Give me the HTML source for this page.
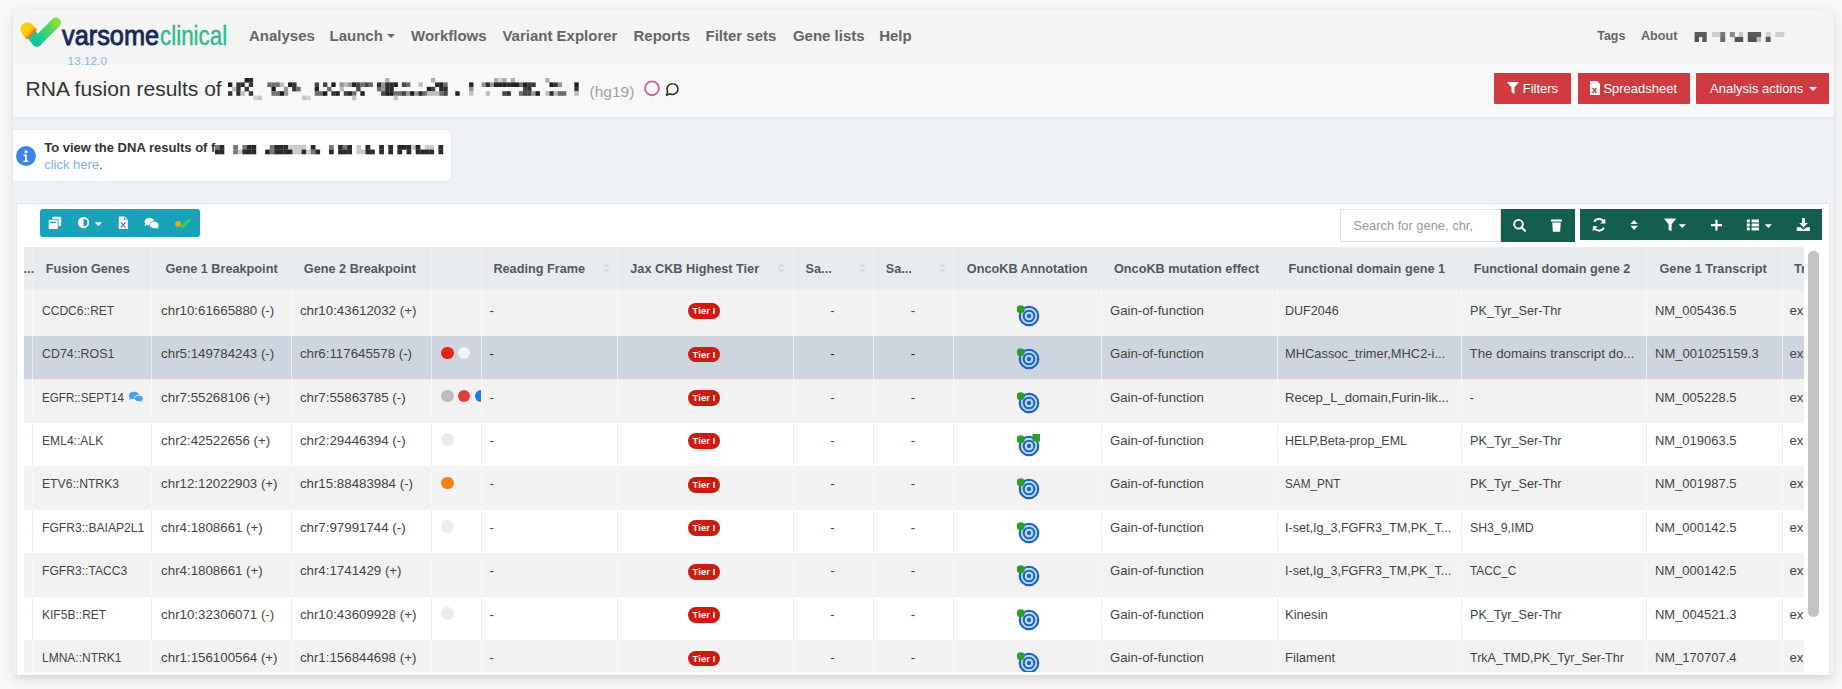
<!DOCTYPE html>
<html><head><meta charset="utf-8"><style>
html,body{margin:0;padding:0;}
body{width:1842px;height:689px;overflow:hidden;background:#fafafa;position:relative;font-family:"Liberation Sans", sans-serif;}
.t{position:absolute;white-space:nowrap;}
.r{position:absolute;}
</style></head><body>
<div class="r" style="left:13.00px;top:9.00px;width:1821.00px;height:666.00px;background:#eef2f7;box-shadow:0 4px 18px rgba(0,0,0,0.10),0 0 2px rgba(0,0,0,0.05),0 5px 5px -1px rgba(0,0,0,0.05);"></div><div class="r" style="left:13.00px;top:9.00px;width:1821.00px;height:55.00px;background:#f4f4f4;"></div><div class="r" style="left:13.00px;top:64.00px;width:1821.00px;height:54.50px;background:#f8f8f8;border-bottom:2.5px solid #e7eaed;box-sizing:border-box;"></div><svg class="r" style="left:17px;top:12.5px" width="48" height="38" viewBox="0 0 48 38">
<defs>
<linearGradient id="lg1" x1="0" y1="1" x2="1" y2="0"><stop offset="0" stop-color="#10c79c"/><stop offset="0.55" stop-color="#3fd46e"/><stop offset="1" stop-color="#86de3a"/></linearGradient>
<linearGradient id="lg2" x1="0.2" y1="0.1" x2="0.9" y2="0.9"><stop offset="0" stop-color="#ffd000"/><stop offset="0.5" stop-color="#fbb30c"/><stop offset="1" stop-color="#f26b22"/></linearGradient>
<clipPath id="cp1"><polygon points="-9.7,44.7 41.4,-2.9 41.4,-20 -20,-20 -20,44.7"/></clipPath>
</defs>
<path d="M11.5 17.5 L20 28.5" stroke="#14c995" stroke-width="10.5" stroke-linecap="round" fill="none"/>
<path d="M20 28.5 L39 9.5" stroke="url(#lg1)" stroke-width="10" stroke-linecap="round" fill="none"/>
<g clip-path="url(#cp1)"><path d="M10.5 16.3 L15 22" stroke="url(#lg2)" stroke-width="14" stroke-linecap="round" fill="none"/></g>
</svg><div class="t" style="left:62.20px;top:21.50px;font-size:28px;line-height:28px;color:#15295a;font-weight:400;transform:scaleX(0.905);transform-origin:0 0;-webkit-text-stroke:0.9px #15295a;">varsome</div><div class="t" style="left:160.40px;top:21.50px;font-size:28px;line-height:28px;color:#2dbd8a;font-weight:400;transform:scaleX(0.80);transform-origin:0 0;-webkit-text-stroke:0.4px #2dbd8a;">clinical</div><div class="t" style="left:67.60px;top:55.61px;font-size:11.8px;line-height:11.8px;color:#8ab9e6;font-weight:400;">13.12.0</div><div class="t" style="left:249.00px;top:28.00px;font-size:15px;line-height:15px;color:#666;font-weight:700;">Analyses</div><div class="t" style="left:329.50px;top:28.00px;font-size:15px;line-height:15px;color:#666;font-weight:700;">Launch</div><div class="t" style="left:411.00px;top:28.00px;font-size:15px;line-height:15px;color:#666;font-weight:700;">Workflows</div><div class="t" style="left:502.40px;top:28.00px;font-size:15px;line-height:15px;color:#666;font-weight:700;">Variant Explorer</div><div class="t" style="left:633.50px;top:28.00px;font-size:15px;line-height:15px;color:#666;font-weight:700;">Reports</div><div class="t" style="left:705.50px;top:28.00px;font-size:15px;line-height:15px;color:#666;font-weight:700;">Filter sets</div><div class="t" style="left:792.90px;top:28.00px;font-size:15px;line-height:15px;color:#666;font-weight:700;">Gene lists</div><div class="t" style="left:879.20px;top:28.00px;font-size:15px;line-height:15px;color:#666;font-weight:700;">Help</div><div class="r" style="left:387px;top:34px;width:0;height:0;border-left:4px solid transparent;border-right:4px solid transparent;border-top:4px solid #666"></div><div class="t" style="left:1597.30px;top:29.80px;font-size:12.4px;line-height:12.4px;color:#666;font-weight:700;">Tags</div><div class="t" style="left:1641.00px;top:29.63px;font-size:12.6px;line-height:12.6px;color:#666;font-weight:700;">About</div><svg class="r" style="left:1693.5px;top:32px" width="95" height="11"><rect x="0.60" y="0.00" width="12.15" height="5.1" fill="#5c5c5c"/><rect x="0.60" y="4.90" width="4.38" height="5.1" fill="#555"/><rect x="8.36" y="4.90" width="4.38" height="5.1" fill="#5c5c5c"/><rect x="17.92" y="0.00" width="8.56" height="5.1" fill="#cfcfcf"/><rect x="26.28" y="0.00" width="4.98" height="5.1" fill="#7a7a7a"/><rect x="26.28" y="4.90" width="4.98" height="5.1" fill="#6a6a6a"/><rect x="35.84" y="0.00" width="4.98" height="5.1" fill="#8a8a8a"/><rect x="44.80" y="0.00" width="4.38" height="5.1" fill="#c8c8c8"/><rect x="40.62" y="4.90" width="8.56" height="5.1" fill="#555"/><rect x="53.76" y="0.00" width="13.34" height="5.1" fill="#5a5a5a"/><rect x="53.76" y="4.90" width="9.16" height="5.1" fill="#505050"/><rect x="62.72" y="4.90" width="4.38" height="5.1" fill="#bdbdbd"/><rect x="71.68" y="0.00" width="4.98" height="5.1" fill="#d0d0d0"/><rect x="71.68" y="4.90" width="4.98" height="5.1" fill="#5a5a5a"/><rect x="81.24" y="0.00" width="9.16" height="5.1" fill="#cfcfcf"/></svg><div class="t" style="left:25.60px;top:77.82px;font-size:21px;line-height:21px;color:#333;font-weight:400;">RNA fusion results of</div><svg class="r" style="left:227.70px;top:78.20px" width="351.3" height="23.0"><rect x="0.00" y="4.40" width="4.35" height="4.60" fill="rgb(30,30,30)"/><rect x="0.00" y="13.20" width="4.35" height="4.60" fill="rgb(55,55,55)"/><rect x="4.15" y="8.80" width="4.35" height="4.60" fill="rgb(190,190,190)"/><rect x="8.30" y="4.40" width="4.35" height="4.60" fill="rgb(55,55,55)"/><rect x="8.30" y="8.80" width="4.35" height="4.60" fill="rgb(55,55,55)"/><rect x="8.30" y="13.20" width="4.35" height="4.60" fill="rgb(45,45,45)"/><rect x="12.45" y="4.40" width="4.35" height="4.60" fill="rgb(45,45,45)"/><rect x="12.45" y="13.20" width="4.35" height="4.60" fill="rgb(190,190,190)"/><rect x="16.60" y="0.00" width="4.35" height="4.60" fill="rgb(30,30,30)"/><rect x="16.60" y="8.80" width="4.35" height="4.60" fill="rgb(55,55,55)"/><rect x="20.75" y="0.00" width="4.35" height="4.60" fill="rgb(45,45,45)"/><rect x="20.75" y="4.40" width="4.35" height="4.60" fill="rgb(55,55,55)"/><rect x="20.75" y="13.20" width="4.35" height="4.60" fill="rgb(55,55,55)"/><rect x="25.30" y="17.60" width="4.35" height="4.60" fill="rgb(210,210,210)"/><rect x="29.45" y="17.60" width="4.35" height="4.60" fill="rgb(195,195,195)"/><rect x="39.30" y="4.40" width="4.35" height="4.60" fill="rgb(110,110,110)"/><rect x="43.45" y="4.40" width="4.35" height="4.60" fill="rgb(110,110,110)"/><rect x="43.45" y="8.80" width="4.35" height="4.60" fill="rgb(30,30,30)"/><rect x="43.45" y="13.20" width="4.35" height="4.60" fill="rgb(110,110,110)"/><rect x="47.60" y="4.40" width="4.35" height="4.60" fill="rgb(110,110,110)"/><rect x="47.60" y="13.20" width="4.35" height="4.60" fill="rgb(110,110,110)"/><rect x="51.75" y="4.40" width="4.35" height="4.60" fill="rgb(190,190,190)"/><rect x="51.75" y="13.20" width="4.35" height="4.60" fill="rgb(30,30,30)"/><rect x="55.90" y="8.80" width="4.35" height="4.60" fill="rgb(150,150,150)"/><rect x="55.90" y="13.20" width="4.35" height="4.60" fill="rgb(150,150,150)"/><rect x="60.05" y="4.40" width="4.35" height="4.60" fill="rgb(30,30,30)"/><rect x="64.20" y="4.40" width="4.35" height="4.60" fill="rgb(55,55,55)"/><rect x="64.20" y="8.80" width="4.35" height="4.60" fill="rgb(55,55,55)"/><rect x="68.35" y="8.80" width="4.35" height="4.60" fill="rgb(110,110,110)"/><rect x="74.30" y="17.60" width="4.35" height="4.60" fill="rgb(195,195,195)"/><rect x="78.45" y="17.60" width="4.35" height="4.60" fill="rgb(210,210,210)"/><rect x="86.70" y="4.40" width="4.35" height="4.60" fill="rgb(70,70,70)"/><rect x="86.70" y="8.80" width="4.35" height="4.60" fill="rgb(35,35,35)"/><rect x="86.70" y="13.20" width="4.35" height="4.60" fill="rgb(110,110,110)"/><rect x="90.85" y="13.20" width="4.35" height="4.60" fill="rgb(110,110,110)"/><rect x="95.00" y="4.40" width="4.35" height="4.60" fill="rgb(70,70,70)"/><rect x="95.00" y="13.20" width="4.35" height="4.60" fill="rgb(30,30,30)"/><rect x="99.15" y="8.80" width="4.35" height="4.60" fill="rgb(110,110,110)"/><rect x="103.30" y="4.40" width="4.35" height="4.60" fill="rgb(30,30,30)"/><rect x="103.30" y="13.20" width="4.35" height="4.60" fill="rgb(55,55,55)"/><rect x="107.45" y="13.20" width="4.35" height="4.60" fill="rgb(35,35,35)"/><rect x="111.60" y="4.40" width="4.35" height="4.60" fill="rgb(150,150,150)"/><rect x="111.60" y="8.80" width="4.35" height="4.60" fill="rgb(190,190,190)"/><rect x="115.75" y="4.40" width="4.35" height="4.60" fill="rgb(190,190,190)"/><rect x="115.75" y="13.20" width="4.35" height="4.60" fill="rgb(70,70,70)"/><rect x="119.90" y="4.40" width="4.35" height="4.60" fill="rgb(150,150,150)"/><rect x="119.90" y="13.20" width="4.35" height="4.60" fill="rgb(45,45,45)"/><rect x="124.05" y="4.40" width="4.35" height="4.60" fill="rgb(35,35,35)"/><rect x="124.05" y="13.20" width="4.35" height="4.60" fill="rgb(110,110,110)"/><rect x="124.05" y="17.60" width="4.35" height="4.60" fill="rgb(195,195,195)"/><rect x="128.20" y="4.40" width="4.35" height="4.60" fill="rgb(70,70,70)"/><rect x="128.20" y="8.80" width="4.35" height="4.60" fill="rgb(70,70,70)"/><rect x="132.35" y="4.40" width="4.35" height="4.60" fill="rgb(110,110,110)"/><rect x="132.35" y="13.20" width="4.35" height="4.60" fill="rgb(30,30,30)"/><rect x="136.50" y="4.40" width="4.35" height="4.60" fill="rgb(70,70,70)"/><rect x="140.65" y="4.40" width="4.35" height="4.60" fill="rgb(110,110,110)"/><rect x="148.95" y="4.40" width="4.35" height="4.60" fill="rgb(45,45,45)"/><rect x="148.95" y="8.80" width="4.35" height="4.60" fill="rgb(110,110,110)"/><rect x="153.10" y="4.40" width="4.35" height="4.60" fill="rgb(150,150,150)"/><rect x="153.10" y="8.80" width="4.35" height="4.60" fill="rgb(150,150,150)"/><rect x="153.10" y="13.20" width="4.35" height="4.60" fill="rgb(70,70,70)"/><rect x="157.25" y="0.00" width="4.35" height="4.60" fill="rgb(175,175,175)"/><rect x="157.25" y="4.40" width="4.35" height="4.60" fill="rgb(45,45,45)"/><rect x="157.25" y="8.80" width="4.35" height="4.60" fill="rgb(45,45,45)"/><rect x="157.25" y="13.20" width="4.35" height="4.60" fill="rgb(30,30,30)"/><rect x="161.40" y="4.40" width="4.35" height="4.60" fill="rgb(45,45,45)"/><rect x="161.40" y="8.80" width="4.35" height="4.60" fill="rgb(45,45,45)"/><rect x="161.40" y="13.20" width="4.35" height="4.60" fill="rgb(30,30,30)"/><rect x="165.55" y="4.40" width="4.35" height="4.60" fill="rgb(35,35,35)"/><rect x="165.55" y="13.20" width="4.35" height="4.60" fill="rgb(110,110,110)"/><rect x="165.55" y="17.60" width="4.35" height="4.60" fill="rgb(195,195,195)"/><rect x="169.70" y="13.20" width="4.35" height="4.60" fill="rgb(110,110,110)"/><rect x="173.85" y="4.40" width="4.35" height="4.60" fill="rgb(70,70,70)"/><rect x="173.85" y="13.20" width="4.35" height="4.60" fill="rgb(70,70,70)"/><rect x="178.00" y="4.40" width="4.35" height="4.60" fill="rgb(110,110,110)"/><rect x="178.00" y="13.20" width="4.35" height="4.60" fill="rgb(150,150,150)"/><rect x="182.15" y="13.20" width="4.35" height="4.60" fill="rgb(30,30,30)"/><rect x="186.30" y="13.20" width="4.35" height="4.60" fill="rgb(150,150,150)"/><rect x="190.45" y="4.40" width="4.35" height="4.60" fill="rgb(190,190,190)"/><rect x="190.45" y="13.20" width="4.35" height="4.60" fill="rgb(45,45,45)"/><rect x="194.60" y="13.20" width="4.35" height="4.60" fill="rgb(110,110,110)"/><rect x="198.75" y="8.80" width="4.35" height="4.60" fill="rgb(30,30,30)"/><rect x="198.75" y="13.20" width="4.35" height="4.60" fill="rgb(190,190,190)"/><rect x="202.90" y="0.00" width="4.35" height="4.60" fill="rgb(175,175,175)"/><rect x="202.90" y="8.80" width="4.35" height="4.60" fill="rgb(70,70,70)"/><rect x="202.90" y="13.20" width="4.35" height="4.60" fill="rgb(190,190,190)"/><rect x="207.05" y="4.40" width="4.35" height="4.60" fill="rgb(45,45,45)"/><rect x="207.05" y="13.20" width="4.35" height="4.60" fill="rgb(190,190,190)"/><rect x="211.20" y="4.40" width="4.35" height="4.60" fill="rgb(35,35,35)"/><rect x="211.20" y="8.80" width="4.35" height="4.60" fill="rgb(45,45,45)"/><rect x="211.20" y="13.20" width="4.35" height="4.60" fill="rgb(110,110,110)"/><rect x="215.35" y="4.40" width="4.35" height="4.60" fill="rgb(110,110,110)"/><rect x="215.35" y="8.80" width="4.35" height="4.60" fill="rgb(45,45,45)"/><rect x="215.35" y="13.20" width="4.35" height="4.60" fill="rgb(70,70,70)"/><rect x="227.30" y="13.20" width="4.35" height="4.60" fill="rgb(35,35,35)"/><rect x="241.10" y="4.40" width="4.35" height="4.60" fill="rgb(30,30,30)"/><rect x="241.10" y="8.80" width="4.35" height="4.60" fill="rgb(150,150,150)"/><rect x="241.10" y="13.20" width="4.35" height="4.60" fill="rgb(190,190,190)"/><rect x="253.55" y="4.40" width="4.35" height="4.60" fill="rgb(150,150,150)"/><rect x="257.70" y="4.40" width="4.35" height="4.60" fill="rgb(45,45,45)"/><rect x="257.70" y="13.20" width="4.35" height="4.60" fill="rgb(190,190,190)"/><rect x="261.85" y="4.40" width="4.35" height="4.60" fill="rgb(150,150,150)"/><rect x="266.00" y="0.00" width="4.35" height="4.60" fill="rgb(175,175,175)"/><rect x="266.00" y="4.40" width="4.35" height="4.60" fill="rgb(35,35,35)"/><rect x="270.15" y="0.00" width="4.35" height="4.60" fill="rgb(210,210,210)"/><rect x="270.15" y="4.40" width="4.35" height="4.60" fill="rgb(35,35,35)"/><rect x="274.30" y="0.00" width="4.35" height="4.60" fill="rgb(175,175,175)"/><rect x="274.30" y="4.40" width="4.35" height="4.60" fill="rgb(35,35,35)"/><rect x="274.30" y="13.20" width="4.35" height="4.60" fill="rgb(70,70,70)"/><rect x="278.45" y="4.40" width="4.35" height="4.60" fill="rgb(45,45,45)"/><rect x="278.45" y="13.20" width="4.35" height="4.60" fill="rgb(45,45,45)"/><rect x="282.60" y="0.00" width="4.35" height="4.60" fill="rgb(175,175,175)"/><rect x="282.60" y="4.40" width="4.35" height="4.60" fill="rgb(35,35,35)"/><rect x="286.75" y="4.40" width="4.35" height="4.60" fill="rgb(35,35,35)"/><rect x="290.90" y="4.40" width="4.35" height="4.60" fill="rgb(110,110,110)"/><rect x="290.90" y="13.20" width="4.35" height="4.60" fill="rgb(110,110,110)"/><rect x="295.05" y="4.40" width="4.35" height="4.60" fill="rgb(30,30,30)"/><rect x="295.05" y="8.80" width="4.35" height="4.60" fill="rgb(70,70,70)"/><rect x="295.05" y="13.20" width="4.35" height="4.60" fill="rgb(70,70,70)"/><rect x="299.20" y="4.40" width="4.35" height="4.60" fill="rgb(55,55,55)"/><rect x="299.20" y="8.80" width="4.35" height="4.60" fill="rgb(55,55,55)"/><rect x="299.20" y="13.20" width="4.35" height="4.60" fill="rgb(70,70,70)"/><rect x="303.35" y="4.40" width="4.35" height="4.60" fill="rgb(55,55,55)"/><rect x="303.35" y="13.20" width="4.35" height="4.60" fill="rgb(150,150,150)"/><rect x="307.50" y="13.20" width="4.35" height="4.60" fill="rgb(30,30,30)"/><rect x="317.30" y="0.00" width="4.35" height="4.60" fill="rgb(175,175,175)"/><rect x="317.30" y="13.20" width="4.35" height="4.60" fill="rgb(190,190,190)"/><rect x="321.45" y="4.40" width="4.35" height="4.60" fill="rgb(30,30,30)"/><rect x="321.45" y="13.20" width="4.35" height="4.60" fill="rgb(45,45,45)"/><rect x="325.60" y="4.40" width="4.35" height="4.60" fill="rgb(55,55,55)"/><rect x="325.60" y="13.20" width="4.35" height="4.60" fill="rgb(190,190,190)"/><rect x="329.75" y="4.40" width="4.35" height="4.60" fill="rgb(150,150,150)"/><rect x="329.75" y="13.20" width="4.35" height="4.60" fill="rgb(110,110,110)"/><rect x="333.90" y="13.20" width="4.35" height="4.60" fill="rgb(110,110,110)"/><rect x="346.35" y="4.40" width="4.35" height="4.60" fill="rgb(30,30,30)"/><rect x="346.35" y="8.80" width="4.35" height="4.60" fill="rgb(55,55,55)"/><rect x="346.35" y="13.20" width="4.35" height="4.60" fill="rgb(190,190,190)"/></svg><div class="t" style="left:589.50px;top:84.08px;font-size:15.5px;line-height:15.5px;color:#a2a2a2;font-weight:400;">(hg19)</div><svg class="r" style="left:642px;top:78px" width="20" height="20" viewBox="0 0 20 20"><circle cx="10" cy="10.3" r="6.9" fill="none" stroke="#d65c9d" stroke-width="1.9"/></svg><svg class="r" style="left:664px;top:81px" width="16" height="16" viewBox="0 0 16 16"><path d="M8.6 2.8a5.3 5.3 0 1 1 -2.6 9.9 L2.6 14.4 L3.6 10.6 A5.3 5.3 0 0 1 8.6 2.8z" fill="none" stroke="#333" stroke-width="1.6" stroke-linejoin="round"/></svg><div class="r" style="left:1494.30px;top:73.10px;width:76.90px;height:30.50px;background:#d03a40;border-radius:1px;"></div><div class="t" style="left:1522.70px;top:81.70px;font-size:13px;line-height:13px;color:#fff;font-weight:400;">Filters</div><div class="r" style="left:1577.90px;top:73.10px;width:112.30px;height:30.50px;background:#d03a40;border-radius:1px;"></div><div class="t" style="left:1603.40px;top:81.70px;font-size:13px;line-height:13px;color:#fff;font-weight:400;">Spreadsheet</div><div class="r" style="left:1696.30px;top:73.10px;width:133.20px;height:30.50px;background:#d03a40;border-radius:1px;"></div><div class="t" style="left:1710.00px;top:81.70px;font-size:13px;line-height:13px;color:#fff;font-weight:400;">Analysis actions</div><svg class="r" style="left:1506px;top:80px" width="14" height="16" viewBox="0 0 14 16"><path d="M1 2h12l-4.5 5.5V14l-3-2V7.5z" fill="#fff"/></svg><svg class="r" style="left:1589px;top:80px" width="12" height="16" viewBox="0 0 12 16"><path d="M1 1h7l3 3v11H1z" fill="#fff"/><path d="M3.5 8l4 5M7.5 8l-4 5" stroke="#d03a40" stroke-width="1.3"/></svg><div class="r" style="left:1809px;top:87px;width:0;height:0;border-left:4px solid transparent;border-right:4px solid transparent;border-top:4px solid #fff"></div><div class="r" style="left:13.00px;top:130.00px;width:438.00px;height:51.00px;background:#fff;border-radius:0 5px 5px 0;box-shadow:0 0 0 1px #e7eaee;"></div><div class="r" style="left:15.5px;top:145.5px;width:20px;height:20px;border-radius:50%;background:#3d84e6"></div><svg class="r" style="left:15.5px;top:145.5px" width="20" height="20" viewBox="0 0 20 20"><circle cx="10" cy="5.8" r="1.6" fill="#fff"/><path d="M7.5 8.5h3.3v6h1.5v1.5H7.5v-1.5h1.5v-4.5H7.5z" fill="#fff"/></svg><div class="t" style="left:44.20px;top:140.90px;font-size:13px;line-height:13px;color:#333;font-weight:700;">To view the DNA results of f</div><svg class="r" style="left:215.2px;top:144.5px" width="232" height="10"><rect x="0.00" y="0.00" width="4.76" height="4.75" fill="#77787c"/><rect x="0.00" y="4.55" width="4.76" height="4.75" fill="#2a2a2e"/><rect x="4.56" y="0.00" width="4.76" height="4.75" fill="#2a2a2e"/><rect x="4.56" y="4.55" width="4.76" height="4.75" fill="#2a2a2e"/><rect x="18.24" y="0.00" width="4.76" height="4.75" fill="#77787c"/><rect x="18.24" y="4.55" width="4.76" height="4.75" fill="#77787c"/><rect x="22.80" y="4.55" width="4.76" height="4.75" fill="#c9cacc"/><rect x="27.36" y="0.00" width="4.76" height="4.75" fill="#77787c"/><rect x="27.36" y="4.55" width="4.76" height="4.75" fill="#2a2a2e"/><rect x="31.92" y="0.00" width="4.76" height="4.75" fill="#2a2a2e"/><rect x="31.92" y="4.55" width="4.76" height="4.75" fill="#2a2a2e"/><rect x="36.48" y="0.00" width="4.76" height="4.75" fill="#2a2a2e"/><rect x="36.48" y="4.55" width="4.76" height="4.75" fill="#2a2a2e"/><rect x="50.16" y="4.55" width="4.76" height="4.75" fill="#2a2a2e"/><rect x="54.72" y="0.00" width="4.76" height="4.75" fill="#77787c"/><rect x="54.72" y="4.55" width="4.76" height="4.75" fill="#77787c"/><rect x="59.28" y="0.00" width="4.76" height="4.75" fill="#2a2a2e"/><rect x="59.28" y="4.55" width="4.76" height="4.75" fill="#2a2a2e"/><rect x="63.84" y="0.00" width="4.76" height="4.75" fill="#2a2a2e"/><rect x="63.84" y="4.55" width="4.76" height="4.75" fill="#2a2a2e"/><rect x="68.40" y="0.00" width="4.76" height="4.75" fill="#2a2a2e"/><rect x="68.40" y="4.55" width="4.76" height="4.75" fill="#2a2a2e"/><rect x="72.96" y="0.00" width="4.76" height="4.75" fill="#c9cacc"/><rect x="72.96" y="4.55" width="4.76" height="4.75" fill="#2a2a2e"/><rect x="77.52" y="0.00" width="4.76" height="4.75" fill="#c9cacc"/><rect x="77.52" y="4.55" width="4.76" height="4.75" fill="#c9cacc"/><rect x="82.08" y="0.00" width="4.76" height="4.75" fill="#c9cacc"/><rect x="82.08" y="4.55" width="4.76" height="4.75" fill="#c9cacc"/><rect x="86.64" y="0.00" width="4.76" height="4.75" fill="#c9cacc"/><rect x="86.64" y="4.55" width="4.76" height="4.75" fill="#2a2a2e"/><rect x="91.20" y="4.55" width="4.76" height="4.75" fill="#c9cacc"/><rect x="95.76" y="0.00" width="4.76" height="4.75" fill="#2a2a2e"/><rect x="95.76" y="4.55" width="4.76" height="4.75" fill="#77787c"/><rect x="100.32" y="4.55" width="4.76" height="4.75" fill="#2a2a2e"/><rect x="114.00" y="0.00" width="4.76" height="4.75" fill="#77787c"/><rect x="114.00" y="4.55" width="4.76" height="4.75" fill="#2a2a2e"/><rect x="123.12" y="0.00" width="4.76" height="4.75" fill="#2a2a2e"/><rect x="123.12" y="4.55" width="4.76" height="4.75" fill="#2a2a2e"/><rect x="127.68" y="0.00" width="4.76" height="4.75" fill="#77787c"/><rect x="127.68" y="4.55" width="4.76" height="4.75" fill="#2a2a2e"/><rect x="132.24" y="0.00" width="4.76" height="4.75" fill="#2a2a2e"/><rect x="132.24" y="4.55" width="4.76" height="4.75" fill="#2a2a2e"/><rect x="141.36" y="0.00" width="4.76" height="4.75" fill="#c9cacc"/><rect x="141.36" y="4.55" width="4.76" height="4.75" fill="#c9cacc"/><rect x="145.92" y="4.55" width="4.76" height="4.75" fill="#c9cacc"/><rect x="150.48" y="0.00" width="4.76" height="4.75" fill="#2a2a2e"/><rect x="150.48" y="4.55" width="4.76" height="4.75" fill="#2a2a2e"/><rect x="155.04" y="4.55" width="4.76" height="4.75" fill="#2a2a2e"/><rect x="164.16" y="0.00" width="4.76" height="4.75" fill="#2a2a2e"/><rect x="164.16" y="4.55" width="4.76" height="4.75" fill="#2a2a2e"/><rect x="173.28" y="0.00" width="4.76" height="4.75" fill="#2a2a2e"/><rect x="173.28" y="4.55" width="4.76" height="4.75" fill="#2a2a2e"/><rect x="182.40" y="0.00" width="4.76" height="4.75" fill="#2a2a2e"/><rect x="182.40" y="4.55" width="4.76" height="4.75" fill="#2a2a2e"/><rect x="186.96" y="0.00" width="4.76" height="4.75" fill="#2a2a2e"/><rect x="191.52" y="0.00" width="4.76" height="4.75" fill="#2a2a2e"/><rect x="191.52" y="4.55" width="4.76" height="4.75" fill="#2a2a2e"/><rect x="196.08" y="0.00" width="4.76" height="4.75" fill="#c9cacc"/><rect x="200.64" y="0.00" width="4.76" height="4.75" fill="#2a2a2e"/><rect x="200.64" y="4.55" width="4.76" height="4.75" fill="#2a2a2e"/><rect x="205.20" y="4.55" width="4.76" height="4.75" fill="#2a2a2e"/><rect x="209.76" y="0.00" width="4.76" height="4.75" fill="#c9cacc"/><rect x="209.76" y="4.55" width="4.76" height="4.75" fill="#2a2a2e"/><rect x="214.32" y="0.00" width="4.76" height="4.75" fill="#c9cacc"/><rect x="214.32" y="4.55" width="4.76" height="4.75" fill="#2a2a2e"/><rect x="223.44" y="0.00" width="4.76" height="4.75" fill="#2a2a2e"/><rect x="223.44" y="4.55" width="4.76" height="4.75" fill="#2a2a2e"/></svg><div class="t" style="left:44.20px;top:157.50px;font-size:13px;line-height:13px;color:#333;font-weight:400;"><span style="color:#7fb2e5">click here</span>.</div><div class="r" style="left:15.50px;top:202.50px;width:1814.50px;height:472.50px;background:#fff;border:1px solid #e4e6e9;border-bottom:none;box-sizing:border-box;"></div><div class="r" style="left:40.00px;top:209.30px;width:160.00px;height:28.00px;background:#17a2b8;border-radius:3px;"></div><div class="r" style="left:1340.00px;top:209.20px;width:161.00px;height:32.40px;background:#fff;border:1px solid #e0e0e0;box-sizing:border-box;"></div><div class="t" style="left:1353.30px;top:219.88px;font-size:12.9px;line-height:12.9px;color:#9a9a9a;font-weight:400;">Search for gene, chr,</div><div class="r" style="left:1501.00px;top:209.20px;width:74.00px;height:32.40px;background:#145e4f;"></div><div class="r" style="left:1580.00px;top:209.20px;width:242.20px;height:31.20px;background:#145e4f;"></div><svg class="r" style="left:40px;top:209px" width="160" height="29" viewBox="40 209 160 29">
<rect x="52.2" y="216.7" width="8.9" height="9.6" rx="1" fill="#fff"/>
<rect x="48.0" y="219.0" width="10.6" height="10.9" rx="1.2" fill="#17a2b8"/>
<rect x="48.7" y="219.8" width="9.1" height="9.3" rx="1" fill="#fff"/>
<rect x="49.8" y="221.7" width="6" height="1.3" fill="#17a2b8"/>
<circle cx="83.5" cy="222.6" r="4.8" fill="none" stroke="#fff" stroke-width="1.7"/>
<path d="M83.5 217.8 A4.8 4.8 0 0 0 83.5 227.4 Z" fill="#fff"/>
<path d="M94.6 222.2 H102.2 L98.4 226.3 Z" fill="#fff"/>
<path d="M118.8 216.4 H124.8 L127.8 219.4 V229 H118.8 Z" fill="#fff"/>
<path d="M124.5 216.6 V219.7 H127.6" fill="none" stroke="#17a2b8" stroke-width="0.8"/>
<path d="M121 222.3 L125.4 227.6 M125.4 222.3 L121 227.6" stroke="#4d7f88" stroke-width="1.3"/>
<ellipse cx="149.5" cy="221.6" rx="4.9" ry="3.8" fill="#fff"/>
<path d="M145.2 223.5 L144.5 226 L148 224.8 Z" fill="#fff"/>
<ellipse cx="154.3" cy="225" rx="4.7" ry="3.7" fill="#fff" stroke="#17a2b8" stroke-width="0.8"/>
<path d="M157.5 226.5 L159 228.8 L155.5 228 Z" fill="#fff"/>
<path d="M182.3 226.6 L189.1 220.3" stroke="#27cf6a" stroke-width="3.6" stroke-linecap="round"/>
<circle cx="178.1" cy="223.9" r="2.9" fill="#f4a21a"/>
</svg><svg class="r" style="left:1501px;top:209px" width="322" height="33" viewBox="1501 209 322 33">
<circle cx="1518.5" cy="224.2" r="4.3" fill="none" stroke="#fff" stroke-width="1.9"/>
<path d="M1521.6 227.4 L1525 230.8" stroke="#fff" stroke-width="2.1" stroke-linecap="round"/>
<rect x="1551" y="219.6" width="10.9" height="1.9" rx="0.5" fill="#fff"/>
<path d="M1552.2 222.5 H1560.8 L1560.1 231.8 H1552.9 Z" fill="#fff"/>
<path d="M1604.3 222.6 A5.6 5.6 0 0 0 1594.2 221.8" fill="none" stroke="#fff" stroke-width="2"/>
<path d="M1605.3 218.4 V223.4 H1600.4 Z" fill="#fff"/>
<path d="M1593.8 227 A5.6 5.6 0 0 0 1603.9 227.8" fill="none" stroke="#fff" stroke-width="2"/>
<path d="M1592.8 231.2 V226.2 H1597.7 Z" fill="#fff"/>
<path d="M1630.4 224 L1634.1 219.9 L1637.8 224 Z M1630.4 225.8 L1634.1 230 L1637.8 225.8 Z" fill="#fff"/>
<path d="M1663.8 218.4 H1676.3 L1671.6 224.3 V230.9 L1668.6 230 V224.3 Z" fill="#fff"/>
<path d="M1678.7 224.3 H1685.9 L1682.3 227.9 Z" fill="#fff"/>
<path d="M1716.45 219.8 V230.4 M1710.9 225.1 H1722" stroke="#fff" stroke-width="2.2"/>
<rect x="1746.8" y="219.5" width="3" height="2.9" fill="#fff"/><rect x="1751.6" y="219.5" width="7.4" height="2.9" fill="#fff"/>
<rect x="1746.8" y="223.5" width="3" height="2.9" fill="#fff"/><rect x="1751.6" y="223.5" width="7.4" height="2.9" fill="#fff"/>
<rect x="1746.8" y="227.5" width="3" height="2.9" fill="#fff"/><rect x="1751.6" y="227.5" width="7.4" height="2.9" fill="#fff"/>
<path d="M1764.8 224.2 H1771.9 L1768.35 228 Z" fill="#fff"/>
<path d="M1802 218.1 H1805 V223 H1807.8 L1803.5 227.4 L1799.2 223 H1802 Z" fill="#fff"/>
<path d="M1796.7 227.3 H1800.5 L1803.5 229.8 L1806.5 227.3 H1809.9 V231 H1796.7 Z" fill="#fff"/>
</svg><div class="r" style="left:24px;top:247px;width:1779.5px;height:43px;overflow:hidden;background:#e9ecef"></div><div class="r" style="left:31.80px;top:247.00px;width:1.00px;height:43.00px;background:#eef0f3;"></div><div class="r" style="left:151.00px;top:247.00px;width:1.00px;height:43.00px;background:#eef0f3;"></div><div class="r" style="left:290.50px;top:247.00px;width:1.00px;height:43.00px;background:#eef0f3;"></div><div class="r" style="left:430.50px;top:247.00px;width:1.00px;height:43.00px;background:#eef0f3;"></div><div class="r" style="left:481.00px;top:247.00px;width:1.00px;height:43.00px;background:#eef0f3;"></div><div class="r" style="left:617.00px;top:247.00px;width:1.00px;height:43.00px;background:#eef0f3;"></div><div class="r" style="left:792.50px;top:247.00px;width:1.00px;height:43.00px;background:#eef0f3;"></div><div class="r" style="left:872.50px;top:247.00px;width:1.00px;height:43.00px;background:#eef0f3;"></div><div class="r" style="left:953.00px;top:247.00px;width:1.00px;height:43.00px;background:#eef0f3;"></div><div class="r" style="left:1101.00px;top:247.00px;width:1.00px;height:43.00px;background:#eef0f3;"></div><div class="r" style="left:1276.50px;top:247.00px;width:1.00px;height:43.00px;background:#eef0f3;"></div><div class="r" style="left:1460.50px;top:247.00px;width:1.00px;height:43.00px;background:#eef0f3;"></div><div class="r" style="left:1646.00px;top:247.00px;width:1.00px;height:43.00px;background:#eef0f3;"></div><div class="r" style="left:1782.00px;top:247.00px;width:1.00px;height:43.00px;background:#eef0f3;"></div><div class="r" style="left:24px;top:247px;width:1779.5px;height:43px;overflow:hidden"><div class="t" style="left:-0.40px;top:15.65px;font-size:12.7px;line-height:12.7px;color:#54585d;font-weight:700">...</div><div class="t" style="left:21.80px;top:15.65px;font-size:12.7px;line-height:12.7px;color:#54585d;font-weight:700">Fusion Genes</div><div class="t" style="left:141.50px;top:15.65px;font-size:12.7px;line-height:12.7px;color:#54585d;font-weight:700">Gene 1 Breakpoint</div><div class="t" style="left:279.80px;top:15.65px;font-size:12.7px;line-height:12.7px;color:#54585d;font-weight:700">Gene 2 Breakpoint</div><div class="t" style="left:469.40px;top:15.65px;font-size:12.7px;line-height:12.7px;color:#54585d;font-weight:700">Reading Frame</div><div class="t" style="left:606.30px;top:15.65px;font-size:12.7px;line-height:12.7px;color:#54585d;font-weight:700">Jax CKB Highest Tier</div><div class="t" style="left:781.60px;top:15.65px;font-size:12.7px;line-height:12.7px;color:#54585d;font-weight:700">Sa...</div><div class="t" style="left:861.70px;top:15.65px;font-size:12.7px;line-height:12.7px;color:#54585d;font-weight:700">Sa...</div><div class="t" style="left:942.80px;top:15.65px;font-size:12.7px;line-height:12.7px;color:#54585d;font-weight:700">OncoKB Annotation</div><div class="t" style="left:1090.00px;top:15.65px;font-size:12.7px;line-height:12.7px;color:#54585d;font-weight:700">OncoKB mutation effect</div><div class="t" style="left:1264.60px;top:15.65px;font-size:12.7px;line-height:12.7px;color:#54585d;font-weight:700">Functional domain gene 1</div><div class="t" style="left:1449.80px;top:15.65px;font-size:12.7px;line-height:12.7px;color:#54585d;font-weight:700">Functional domain gene 2</div><div class="t" style="left:1635.50px;top:15.65px;font-size:12.7px;line-height:12.7px;color:#54585d;font-weight:700">Gene 1 Transcript</div><div class="t" style="left:1770.00px;top:15.65px;font-size:12.7px;line-height:12.7px;color:#54585d;font-weight:700">Tr</div><svg class="r" style="left:578px;top:15px" width="8" height="12" viewBox="0 0 8 12"><path d="M4 0.5L7.5 5H0.5z M4 11.5L7.5 7H0.5z" fill="#d9dce0"/></svg><svg class="r" style="left:753px;top:15px" width="8" height="12" viewBox="0 0 8 12"><path d="M4 0.5L7.5 5H0.5z M4 11.5L7.5 7H0.5z" fill="#d9dce0"/></svg><svg class="r" style="left:833.5px;top:15px" width="8" height="12" viewBox="0 0 8 12"><path d="M4 0.5L7.5 5H0.5z M4 11.5L7.5 7H0.5z" fill="#d9dce0"/></svg><svg class="r" style="left:914px;top:15px" width="8" height="12" viewBox="0 0 8 12"><path d="M4 0.5L7.5 5H0.5z M4 11.5L7.5 7H0.5z" fill="#d9dce0"/></svg></div><div class="r" style="left:24px;top:290px;width:1779.5px;height:382px;overflow:hidden"><div class="r" style="left:0;top:0.00px;width:1779.5px;height:46.00px;background:#f2f2f2"></div><div class="r" style="left:7.80px;top:0.00px;width:1px;height:46.00px;background:#f8f8f8"></div><div class="r" style="left:127.00px;top:0.00px;width:1px;height:46.00px;background:#f8f8f8"></div><div class="r" style="left:266.50px;top:0.00px;width:1px;height:46.00px;background:#f8f8f8"></div><div class="r" style="left:406.50px;top:0.00px;width:1px;height:46.00px;background:#f8f8f8"></div><div class="r" style="left:457.00px;top:0.00px;width:1px;height:46.00px;background:#f8f8f8"></div><div class="r" style="left:593.00px;top:0.00px;width:1px;height:46.00px;background:#f8f8f8"></div><div class="r" style="left:768.50px;top:0.00px;width:1px;height:46.00px;background:#f8f8f8"></div><div class="r" style="left:848.50px;top:0.00px;width:1px;height:46.00px;background:#f8f8f8"></div><div class="r" style="left:929.00px;top:0.00px;width:1px;height:46.00px;background:#f8f8f8"></div><div class="r" style="left:1077.00px;top:0.00px;width:1px;height:46.00px;background:#f8f8f8"></div><div class="r" style="left:1252.50px;top:0.00px;width:1px;height:46.00px;background:#f8f8f8"></div><div class="r" style="left:1436.50px;top:0.00px;width:1px;height:46.00px;background:#f8f8f8"></div><div class="r" style="left:1622.00px;top:0.00px;width:1px;height:46.00px;background:#f8f8f8"></div><div class="r" style="left:1758.00px;top:0.00px;width:1px;height:46.00px;background:#f8f8f8"></div><div class="t" style="left:17.80px;top:13.74px;font-size:13.3px;line-height:13.3px;color:#444;transform:scaleX(0.905);transform-origin:0 0;">CCDC6::RET</div><div class="t" style="left:137.10px;top:13.74px;font-size:13.3px;line-height:13.3px;color:#444;">chr10:61665880 (-)</div><div class="t" style="left:275.90px;top:13.74px;font-size:13.3px;line-height:13.3px;color:#444;">chr10:43612032 (+)</div><div class="t" style="left:465.50px;top:13.74px;font-size:13.3px;line-height:13.3px;color:#444;">-</div><div class="t" style="left:806.20px;top:13.74px;font-size:13.3px;line-height:13.3px;color:#444;">-</div><div class="t" style="left:886.70px;top:13.74px;font-size:13.3px;line-height:13.3px;color:#444;">-</div><div class="t" style="left:1085.50px;top:13.74px;font-size:13.3px;line-height:13.3px;color:#444;transform:scaleX(0.992);transform-origin:0 0;">Gain-of-function</div><div class="t" style="left:1260.50px;top:13.74px;font-size:13.3px;line-height:13.3px;color:#444;transform:scaleX(0.942);transform-origin:0 0;">DUF2046</div><div class="t" style="left:1445.60px;top:13.74px;font-size:13.3px;line-height:13.3px;color:#444;transform:scaleX(0.952);transform-origin:0 0;">PK_Tyr_Ser-Thr</div><div class="t" style="left:1631.30px;top:13.74px;font-size:13.3px;line-height:13.3px;color:#444;transform:scaleX(0.975);transform-origin:0 0;">NM_005436.5</div><div class="t" style="left:1765.40px;top:13.74px;font-size:13.3px;line-height:13.3px;color:#444;">ex</div><div class="r" style="left:664.2px;top:13.20px;width:31.7px;height:15.8px;border-radius:7.9px;background:#cc1c10;color:#fff;font-weight:700;font-size:9.4px;line-height:15.8px;text-align:center;letter-spacing:0.15px">Tier I</div><svg class="r" style="left:992.80px;top:13.70px" width="24" height="24" viewBox="0 0 24 24"><circle cx="12" cy="12" r="9.2" fill="none" stroke="#1e63be" stroke-width="2.3"/><circle cx="12" cy="12" r="7.2" fill="none" stroke="#a8d6fa" stroke-width="1.6"/><circle cx="12" cy="12" r="5.3" fill="none" stroke="#1e63be" stroke-width="2.1"/><circle cx="12" cy="12" r="3.3" fill="none" stroke="#a8d6fa" stroke-width="1.5"/><circle cx="12" cy="12" r="2.2" fill="#1e63be"/><circle cx="3.6" cy="5.2" r="4" fill="#2c9e2c"/></svg><div class="r" style="left:0;top:46.00px;width:1779.5px;height:43.42px;background:#ced5de"></div><div class="r" style="left:7.80px;top:46.00px;width:1px;height:43.42px;background:#e9edf1"></div><div class="r" style="left:127.00px;top:46.00px;width:1px;height:43.42px;background:#e9edf1"></div><div class="r" style="left:266.50px;top:46.00px;width:1px;height:43.42px;background:#e9edf1"></div><div class="r" style="left:406.50px;top:46.00px;width:1px;height:43.42px;background:#e9edf1"></div><div class="r" style="left:457.00px;top:46.00px;width:1px;height:43.42px;background:#e9edf1"></div><div class="r" style="left:593.00px;top:46.00px;width:1px;height:43.42px;background:#e9edf1"></div><div class="r" style="left:768.50px;top:46.00px;width:1px;height:43.42px;background:#e9edf1"></div><div class="r" style="left:848.50px;top:46.00px;width:1px;height:43.42px;background:#e9edf1"></div><div class="r" style="left:929.00px;top:46.00px;width:1px;height:43.42px;background:#e9edf1"></div><div class="r" style="left:1077.00px;top:46.00px;width:1px;height:43.42px;background:#e9edf1"></div><div class="r" style="left:1252.50px;top:46.00px;width:1px;height:43.42px;background:#e9edf1"></div><div class="r" style="left:1436.50px;top:46.00px;width:1px;height:43.42px;background:#e9edf1"></div><div class="r" style="left:1622.00px;top:46.00px;width:1px;height:43.42px;background:#e9edf1"></div><div class="r" style="left:1758.00px;top:46.00px;width:1px;height:43.42px;background:#e9edf1"></div><div class="t" style="left:17.80px;top:57.16px;font-size:13.3px;line-height:13.3px;color:#444;transform:scaleX(0.932);transform-origin:0 0;">CD74::ROS1</div><div class="t" style="left:137.10px;top:57.16px;font-size:13.3px;line-height:13.3px;color:#444;">chr5:149784243 (-)</div><div class="t" style="left:275.90px;top:57.16px;font-size:13.3px;line-height:13.3px;color:#444;">chr6:117645578 (-)</div><div class="t" style="left:465.50px;top:57.16px;font-size:13.3px;line-height:13.3px;color:#222;">-</div><div class="t" style="left:806.20px;top:57.16px;font-size:13.3px;line-height:13.3px;color:#222;">-</div><div class="t" style="left:886.70px;top:57.16px;font-size:13.3px;line-height:13.3px;color:#222;">-</div><div class="t" style="left:1085.50px;top:57.16px;font-size:13.3px;line-height:13.3px;color:#444;transform:scaleX(0.992);transform-origin:0 0;">Gain-of-function</div><div class="t" style="left:1260.50px;top:57.16px;font-size:13.3px;line-height:13.3px;color:#444;transform:scaleX(0.968);transform-origin:0 0;">MHCassoc_trimer,MHC2-i...</div><div class="t" style="left:1445.60px;top:57.16px;font-size:13.3px;line-height:13.3px;color:#444;">The domains transcript do...</div><div class="t" style="left:1631.30px;top:57.16px;font-size:13.3px;line-height:13.3px;color:#444;transform:scaleX(0.981);transform-origin:0 0;">NM_001025159.3</div><div class="t" style="left:1765.40px;top:57.16px;font-size:13.3px;line-height:13.3px;color:#444;">ex</div><div class="r" style="left:407px;top:46.00px;width:50px;height:43.42px;overflow:hidden"><div class="r" style="left:10.35px;top:10.57px;width:12.5px;height:12.5px;border-radius:50%;background:#e8241a"></div><div class="r" style="left:26.95px;top:10.57px;width:12.5px;height:12.5px;border-radius:50%;background:#f4f4f4"></div></div><div class="r" style="left:664.2px;top:56.62px;width:31.7px;height:15.8px;border-radius:7.9px;background:#cc1c10;color:#fff;font-weight:700;font-size:9.4px;line-height:15.8px;text-align:center;letter-spacing:0.15px">Tier I</div><svg class="r" style="left:992.80px;top:57.12px" width="24" height="24" viewBox="0 0 24 24"><circle cx="12" cy="12" r="9.2" fill="none" stroke="#1e63be" stroke-width="2.3"/><circle cx="12" cy="12" r="7.2" fill="none" stroke="#a8d6fa" stroke-width="1.6"/><circle cx="12" cy="12" r="5.3" fill="none" stroke="#1e63be" stroke-width="2.1"/><circle cx="12" cy="12" r="3.3" fill="none" stroke="#a8d6fa" stroke-width="1.5"/><circle cx="12" cy="12" r="2.2" fill="#1e63be"/><circle cx="3.6" cy="5.2" r="4" fill="#2c9e2c"/></svg><div class="r" style="left:0;top:89.42px;width:1779.5px;height:43.42px;background:#f2f2f2"></div><div class="r" style="left:7.80px;top:89.42px;width:1px;height:43.42px;background:#f8f8f8"></div><div class="r" style="left:127.00px;top:89.42px;width:1px;height:43.42px;background:#f8f8f8"></div><div class="r" style="left:266.50px;top:89.42px;width:1px;height:43.42px;background:#f8f8f8"></div><div class="r" style="left:406.50px;top:89.42px;width:1px;height:43.42px;background:#f8f8f8"></div><div class="r" style="left:457.00px;top:89.42px;width:1px;height:43.42px;background:#f8f8f8"></div><div class="r" style="left:593.00px;top:89.42px;width:1px;height:43.42px;background:#f8f8f8"></div><div class="r" style="left:768.50px;top:89.42px;width:1px;height:43.42px;background:#f8f8f8"></div><div class="r" style="left:848.50px;top:89.42px;width:1px;height:43.42px;background:#f8f8f8"></div><div class="r" style="left:929.00px;top:89.42px;width:1px;height:43.42px;background:#f8f8f8"></div><div class="r" style="left:1077.00px;top:89.42px;width:1px;height:43.42px;background:#f8f8f8"></div><div class="r" style="left:1252.50px;top:89.42px;width:1px;height:43.42px;background:#f8f8f8"></div><div class="r" style="left:1436.50px;top:89.42px;width:1px;height:43.42px;background:#f8f8f8"></div><div class="r" style="left:1622.00px;top:89.42px;width:1px;height:43.42px;background:#f8f8f8"></div><div class="r" style="left:1758.00px;top:89.42px;width:1px;height:43.42px;background:#f8f8f8"></div><div class="t" style="left:17.80px;top:100.58px;font-size:13.3px;line-height:13.3px;color:#444;transform:scaleX(0.874);transform-origin:0 0;">EGFR::SEPT14</div><div class="t" style="left:137.10px;top:100.58px;font-size:13.3px;line-height:13.3px;color:#444;">chr7:55268106 (+)</div><div class="t" style="left:275.90px;top:100.58px;font-size:13.3px;line-height:13.3px;color:#444;">chr7:55863785 (-)</div><div class="t" style="left:465.50px;top:100.58px;font-size:13.3px;line-height:13.3px;color:#444;">-</div><div class="t" style="left:806.20px;top:100.58px;font-size:13.3px;line-height:13.3px;color:#444;">-</div><div class="t" style="left:886.70px;top:100.58px;font-size:13.3px;line-height:13.3px;color:#444;">-</div><div class="t" style="left:1085.50px;top:100.58px;font-size:13.3px;line-height:13.3px;color:#444;transform:scaleX(0.992);transform-origin:0 0;">Gain-of-function</div><div class="t" style="left:1260.50px;top:100.58px;font-size:13.3px;line-height:13.3px;color:#444;transform:scaleX(0.985);transform-origin:0 0;">Recep_L_domain,Furin-lik...</div><div class="t" style="left:1445.60px;top:100.58px;font-size:13.3px;line-height:13.3px;color:#444;">-</div><div class="t" style="left:1631.30px;top:100.58px;font-size:13.3px;line-height:13.3px;color:#444;transform:scaleX(0.975);transform-origin:0 0;">NM_005228.5</div><div class="t" style="left:1765.40px;top:100.58px;font-size:13.3px;line-height:13.3px;color:#444;">ex</div><div class="r" style="left:407px;top:89.42px;width:50px;height:43.42px;overflow:hidden"><div class="r" style="left:10.35px;top:10.57px;width:12.5px;height:12.5px;border-radius:50%;background:#bdbdbd"></div><div class="r" style="left:26.95px;top:10.57px;width:12.5px;height:12.5px;border-radius:50%;background:#e53d3a"></div><div class="r" style="left:43.55px;top:10.57px;width:12.5px;height:12.5px;border-radius:50%;background:#1a7ae8"></div></div><div class="r" style="left:664.2px;top:100.04px;width:31.7px;height:15.8px;border-radius:7.9px;background:#cc1c10;color:#fff;font-weight:700;font-size:9.4px;line-height:15.8px;text-align:center;letter-spacing:0.15px">Tier I</div><svg class="r" style="left:992.80px;top:100.54px" width="24" height="24" viewBox="0 0 24 24"><circle cx="12" cy="12" r="9.2" fill="none" stroke="#1e63be" stroke-width="2.3"/><circle cx="12" cy="12" r="7.2" fill="none" stroke="#a8d6fa" stroke-width="1.6"/><circle cx="12" cy="12" r="5.3" fill="none" stroke="#1e63be" stroke-width="2.1"/><circle cx="12" cy="12" r="3.3" fill="none" stroke="#a8d6fa" stroke-width="1.5"/><circle cx="12" cy="12" r="2.2" fill="#1e63be"/><circle cx="3.6" cy="5.2" r="4" fill="#2c9e2c"/></svg><div class="r" style="left:0;top:132.84px;width:1779.5px;height:43.42px;background:#ffffff"></div><div class="r" style="left:7.80px;top:132.84px;width:1px;height:43.42px;background:#efefef"></div><div class="r" style="left:127.00px;top:132.84px;width:1px;height:43.42px;background:#efefef"></div><div class="r" style="left:266.50px;top:132.84px;width:1px;height:43.42px;background:#efefef"></div><div class="r" style="left:406.50px;top:132.84px;width:1px;height:43.42px;background:#efefef"></div><div class="r" style="left:457.00px;top:132.84px;width:1px;height:43.42px;background:#efefef"></div><div class="r" style="left:593.00px;top:132.84px;width:1px;height:43.42px;background:#efefef"></div><div class="r" style="left:768.50px;top:132.84px;width:1px;height:43.42px;background:#efefef"></div><div class="r" style="left:848.50px;top:132.84px;width:1px;height:43.42px;background:#efefef"></div><div class="r" style="left:929.00px;top:132.84px;width:1px;height:43.42px;background:#efefef"></div><div class="r" style="left:1077.00px;top:132.84px;width:1px;height:43.42px;background:#efefef"></div><div class="r" style="left:1252.50px;top:132.84px;width:1px;height:43.42px;background:#efefef"></div><div class="r" style="left:1436.50px;top:132.84px;width:1px;height:43.42px;background:#efefef"></div><div class="r" style="left:1622.00px;top:132.84px;width:1px;height:43.42px;background:#efefef"></div><div class="r" style="left:1758.00px;top:132.84px;width:1px;height:43.42px;background:#efefef"></div><div class="t" style="left:17.80px;top:144.00px;font-size:13.3px;line-height:13.3px;color:#444;transform:scaleX(0.910);transform-origin:0 0;">EML4::ALK</div><div class="t" style="left:137.10px;top:144.00px;font-size:13.3px;line-height:13.3px;color:#444;">chr2:42522656 (+)</div><div class="t" style="left:275.90px;top:144.00px;font-size:13.3px;line-height:13.3px;color:#444;">chr2:29446394 (-)</div><div class="t" style="left:465.50px;top:144.00px;font-size:13.3px;line-height:13.3px;color:#444;">-</div><div class="t" style="left:806.20px;top:144.00px;font-size:13.3px;line-height:13.3px;color:#444;">-</div><div class="t" style="left:886.70px;top:144.00px;font-size:13.3px;line-height:13.3px;color:#444;">-</div><div class="t" style="left:1085.50px;top:144.00px;font-size:13.3px;line-height:13.3px;color:#444;transform:scaleX(0.992);transform-origin:0 0;">Gain-of-function</div><div class="t" style="left:1260.50px;top:144.00px;font-size:13.3px;line-height:13.3px;color:#444;transform:scaleX(0.940);transform-origin:0 0;">HELP,Beta-prop_EML</div><div class="t" style="left:1445.60px;top:144.00px;font-size:13.3px;line-height:13.3px;color:#444;transform:scaleX(0.952);transform-origin:0 0;">PK_Tyr_Ser-Thr</div><div class="t" style="left:1631.30px;top:144.00px;font-size:13.3px;line-height:13.3px;color:#444;transform:scaleX(0.975);transform-origin:0 0;">NM_019063.5</div><div class="t" style="left:1765.40px;top:144.00px;font-size:13.3px;line-height:13.3px;color:#444;">ex</div><div class="r" style="left:407px;top:132.84px;width:50px;height:43.42px;overflow:hidden"><div class="r" style="left:10.35px;top:10.57px;width:12.5px;height:12.5px;border-radius:50%;background:#ececec"></div></div><div class="r" style="left:664.2px;top:143.46px;width:31.7px;height:15.8px;border-radius:7.9px;background:#cc1c10;color:#fff;font-weight:700;font-size:9.4px;line-height:15.8px;text-align:center;letter-spacing:0.15px">Tier I</div><svg class="r" style="left:992.80px;top:143.96px" width="24" height="24" viewBox="0 0 24 24"><circle cx="12" cy="12" r="9.2" fill="none" stroke="#1e63be" stroke-width="2.3"/><circle cx="12" cy="12" r="7.2" fill="none" stroke="#a8d6fa" stroke-width="1.6"/><circle cx="12" cy="12" r="5.3" fill="none" stroke="#1e63be" stroke-width="2.1"/><circle cx="12" cy="12" r="3.3" fill="none" stroke="#a8d6fa" stroke-width="1.5"/><circle cx="12" cy="12" r="2.2" fill="#1e63be"/><rect x="15.5" y="0" width="7.5" height="7.5" fill="#2c9e2c"/><circle cx="3.6" cy="5.2" r="4" fill="#2c9e2c"/></svg><div class="r" style="left:0;top:176.26px;width:1779.5px;height:43.42px;background:#f2f2f2"></div><div class="r" style="left:7.80px;top:176.26px;width:1px;height:43.42px;background:#f8f8f8"></div><div class="r" style="left:127.00px;top:176.26px;width:1px;height:43.42px;background:#f8f8f8"></div><div class="r" style="left:266.50px;top:176.26px;width:1px;height:43.42px;background:#f8f8f8"></div><div class="r" style="left:406.50px;top:176.26px;width:1px;height:43.42px;background:#f8f8f8"></div><div class="r" style="left:457.00px;top:176.26px;width:1px;height:43.42px;background:#f8f8f8"></div><div class="r" style="left:593.00px;top:176.26px;width:1px;height:43.42px;background:#f8f8f8"></div><div class="r" style="left:768.50px;top:176.26px;width:1px;height:43.42px;background:#f8f8f8"></div><div class="r" style="left:848.50px;top:176.26px;width:1px;height:43.42px;background:#f8f8f8"></div><div class="r" style="left:929.00px;top:176.26px;width:1px;height:43.42px;background:#f8f8f8"></div><div class="r" style="left:1077.00px;top:176.26px;width:1px;height:43.42px;background:#f8f8f8"></div><div class="r" style="left:1252.50px;top:176.26px;width:1px;height:43.42px;background:#f8f8f8"></div><div class="r" style="left:1436.50px;top:176.26px;width:1px;height:43.42px;background:#f8f8f8"></div><div class="r" style="left:1622.00px;top:176.26px;width:1px;height:43.42px;background:#f8f8f8"></div><div class="r" style="left:1758.00px;top:176.26px;width:1px;height:43.42px;background:#f8f8f8"></div><div class="t" style="left:17.80px;top:187.42px;font-size:13.3px;line-height:13.3px;color:#444;transform:scaleX(0.914);transform-origin:0 0;">ETV6::NTRK3</div><div class="t" style="left:137.10px;top:187.42px;font-size:13.3px;line-height:13.3px;color:#444;">chr12:12022903 (+)</div><div class="t" style="left:275.90px;top:187.42px;font-size:13.3px;line-height:13.3px;color:#444;">chr15:88483984 (-)</div><div class="t" style="left:465.50px;top:187.42px;font-size:13.3px;line-height:13.3px;color:#444;">-</div><div class="t" style="left:806.20px;top:187.42px;font-size:13.3px;line-height:13.3px;color:#444;">-</div><div class="t" style="left:886.70px;top:187.42px;font-size:13.3px;line-height:13.3px;color:#444;">-</div><div class="t" style="left:1085.50px;top:187.42px;font-size:13.3px;line-height:13.3px;color:#444;transform:scaleX(0.992);transform-origin:0 0;">Gain-of-function</div><div class="t" style="left:1260.50px;top:187.42px;font-size:13.3px;line-height:13.3px;color:#444;transform:scaleX(0.884);transform-origin:0 0;">SAM_PNT</div><div class="t" style="left:1445.60px;top:187.42px;font-size:13.3px;line-height:13.3px;color:#444;transform:scaleX(0.952);transform-origin:0 0;">PK_Tyr_Ser-Thr</div><div class="t" style="left:1631.30px;top:187.42px;font-size:13.3px;line-height:13.3px;color:#444;transform:scaleX(0.975);transform-origin:0 0;">NM_001987.5</div><div class="t" style="left:1765.40px;top:187.42px;font-size:13.3px;line-height:13.3px;color:#444;">ex</div><div class="r" style="left:407px;top:176.26px;width:50px;height:43.42px;overflow:hidden"><div class="r" style="left:10.35px;top:10.57px;width:12.5px;height:12.5px;border-radius:50%;background:#f5820f"></div></div><div class="r" style="left:664.2px;top:186.88px;width:31.7px;height:15.8px;border-radius:7.9px;background:#cc1c10;color:#fff;font-weight:700;font-size:9.4px;line-height:15.8px;text-align:center;letter-spacing:0.15px">Tier I</div><svg class="r" style="left:992.80px;top:187.38px" width="24" height="24" viewBox="0 0 24 24"><circle cx="12" cy="12" r="9.2" fill="none" stroke="#1e63be" stroke-width="2.3"/><circle cx="12" cy="12" r="7.2" fill="none" stroke="#a8d6fa" stroke-width="1.6"/><circle cx="12" cy="12" r="5.3" fill="none" stroke="#1e63be" stroke-width="2.1"/><circle cx="12" cy="12" r="3.3" fill="none" stroke="#a8d6fa" stroke-width="1.5"/><circle cx="12" cy="12" r="2.2" fill="#1e63be"/><circle cx="3.6" cy="5.2" r="4" fill="#2c9e2c"/></svg><div class="r" style="left:0;top:219.68px;width:1779.5px;height:43.42px;background:#ffffff"></div><div class="r" style="left:7.80px;top:219.68px;width:1px;height:43.42px;background:#efefef"></div><div class="r" style="left:127.00px;top:219.68px;width:1px;height:43.42px;background:#efefef"></div><div class="r" style="left:266.50px;top:219.68px;width:1px;height:43.42px;background:#efefef"></div><div class="r" style="left:406.50px;top:219.68px;width:1px;height:43.42px;background:#efefef"></div><div class="r" style="left:457.00px;top:219.68px;width:1px;height:43.42px;background:#efefef"></div><div class="r" style="left:593.00px;top:219.68px;width:1px;height:43.42px;background:#efefef"></div><div class="r" style="left:768.50px;top:219.68px;width:1px;height:43.42px;background:#efefef"></div><div class="r" style="left:848.50px;top:219.68px;width:1px;height:43.42px;background:#efefef"></div><div class="r" style="left:929.00px;top:219.68px;width:1px;height:43.42px;background:#efefef"></div><div class="r" style="left:1077.00px;top:219.68px;width:1px;height:43.42px;background:#efefef"></div><div class="r" style="left:1252.50px;top:219.68px;width:1px;height:43.42px;background:#efefef"></div><div class="r" style="left:1436.50px;top:219.68px;width:1px;height:43.42px;background:#efefef"></div><div class="r" style="left:1622.00px;top:219.68px;width:1px;height:43.42px;background:#efefef"></div><div class="r" style="left:1758.00px;top:219.68px;width:1px;height:43.42px;background:#efefef"></div><div class="t" style="left:17.80px;top:230.84px;font-size:13.3px;line-height:13.3px;color:#444;transform:scaleX(0.910);transform-origin:0 0;">FGFR3::BAIAP2L1</div><div class="t" style="left:137.10px;top:230.84px;font-size:13.3px;line-height:13.3px;color:#444;">chr4:1808661 (+)</div><div class="t" style="left:275.90px;top:230.84px;font-size:13.3px;line-height:13.3px;color:#444;">chr7:97991744 (-)</div><div class="t" style="left:465.50px;top:230.84px;font-size:13.3px;line-height:13.3px;color:#444;">-</div><div class="t" style="left:806.20px;top:230.84px;font-size:13.3px;line-height:13.3px;color:#444;">-</div><div class="t" style="left:886.70px;top:230.84px;font-size:13.3px;line-height:13.3px;color:#444;">-</div><div class="t" style="left:1085.50px;top:230.84px;font-size:13.3px;line-height:13.3px;color:#444;transform:scaleX(0.992);transform-origin:0 0;">Gain-of-function</div><div class="t" style="left:1260.50px;top:230.84px;font-size:13.3px;line-height:13.3px;color:#444;transform:scaleX(0.945);transform-origin:0 0;">I-set,Ig_3,FGFR3_TM,PK_T...</div><div class="t" style="left:1445.60px;top:230.84px;font-size:13.3px;line-height:13.3px;color:#444;transform:scaleX(0.925);transform-origin:0 0;">SH3_9,IMD</div><div class="t" style="left:1631.30px;top:230.84px;font-size:13.3px;line-height:13.3px;color:#444;transform:scaleX(0.975);transform-origin:0 0;">NM_000142.5</div><div class="t" style="left:1765.40px;top:230.84px;font-size:13.3px;line-height:13.3px;color:#444;">ex</div><div class="r" style="left:407px;top:219.68px;width:50px;height:43.42px;overflow:hidden"><div class="r" style="left:10.35px;top:10.57px;width:12.5px;height:12.5px;border-radius:50%;background:#ececec"></div></div><div class="r" style="left:664.2px;top:230.30px;width:31.7px;height:15.8px;border-radius:7.9px;background:#cc1c10;color:#fff;font-weight:700;font-size:9.4px;line-height:15.8px;text-align:center;letter-spacing:0.15px">Tier I</div><svg class="r" style="left:992.80px;top:230.80px" width="24" height="24" viewBox="0 0 24 24"><circle cx="12" cy="12" r="9.2" fill="none" stroke="#1e63be" stroke-width="2.3"/><circle cx="12" cy="12" r="7.2" fill="none" stroke="#a8d6fa" stroke-width="1.6"/><circle cx="12" cy="12" r="5.3" fill="none" stroke="#1e63be" stroke-width="2.1"/><circle cx="12" cy="12" r="3.3" fill="none" stroke="#a8d6fa" stroke-width="1.5"/><circle cx="12" cy="12" r="2.2" fill="#1e63be"/><circle cx="3.6" cy="5.2" r="4" fill="#2c9e2c"/></svg><div class="r" style="left:0;top:263.10px;width:1779.5px;height:43.42px;background:#f2f2f2"></div><div class="r" style="left:7.80px;top:263.10px;width:1px;height:43.42px;background:#f8f8f8"></div><div class="r" style="left:127.00px;top:263.10px;width:1px;height:43.42px;background:#f8f8f8"></div><div class="r" style="left:266.50px;top:263.10px;width:1px;height:43.42px;background:#f8f8f8"></div><div class="r" style="left:406.50px;top:263.10px;width:1px;height:43.42px;background:#f8f8f8"></div><div class="r" style="left:457.00px;top:263.10px;width:1px;height:43.42px;background:#f8f8f8"></div><div class="r" style="left:593.00px;top:263.10px;width:1px;height:43.42px;background:#f8f8f8"></div><div class="r" style="left:768.50px;top:263.10px;width:1px;height:43.42px;background:#f8f8f8"></div><div class="r" style="left:848.50px;top:263.10px;width:1px;height:43.42px;background:#f8f8f8"></div><div class="r" style="left:929.00px;top:263.10px;width:1px;height:43.42px;background:#f8f8f8"></div><div class="r" style="left:1077.00px;top:263.10px;width:1px;height:43.42px;background:#f8f8f8"></div><div class="r" style="left:1252.50px;top:263.10px;width:1px;height:43.42px;background:#f8f8f8"></div><div class="r" style="left:1436.50px;top:263.10px;width:1px;height:43.42px;background:#f8f8f8"></div><div class="r" style="left:1622.00px;top:263.10px;width:1px;height:43.42px;background:#f8f8f8"></div><div class="r" style="left:1758.00px;top:263.10px;width:1px;height:43.42px;background:#f8f8f8"></div><div class="t" style="left:17.80px;top:274.26px;font-size:13.3px;line-height:13.3px;color:#444;transform:scaleX(0.910);transform-origin:0 0;">FGFR3::TACC3</div><div class="t" style="left:137.10px;top:274.26px;font-size:13.3px;line-height:13.3px;color:#444;">chr4:1808661 (+)</div><div class="t" style="left:275.90px;top:274.26px;font-size:13.3px;line-height:13.3px;color:#444;">chr4:1741429 (+)</div><div class="t" style="left:465.50px;top:274.26px;font-size:13.3px;line-height:13.3px;color:#444;">-</div><div class="t" style="left:806.20px;top:274.26px;font-size:13.3px;line-height:13.3px;color:#444;">-</div><div class="t" style="left:886.70px;top:274.26px;font-size:13.3px;line-height:13.3px;color:#444;">-</div><div class="t" style="left:1085.50px;top:274.26px;font-size:13.3px;line-height:13.3px;color:#444;transform:scaleX(0.992);transform-origin:0 0;">Gain-of-function</div><div class="t" style="left:1260.50px;top:274.26px;font-size:13.3px;line-height:13.3px;color:#444;transform:scaleX(0.945);transform-origin:0 0;">I-set,Ig_3,FGFR3_TM,PK_T...</div><div class="t" style="left:1445.60px;top:274.26px;font-size:13.3px;line-height:13.3px;color:#444;transform:scaleX(0.887);transform-origin:0 0;">TACC_C</div><div class="t" style="left:1631.30px;top:274.26px;font-size:13.3px;line-height:13.3px;color:#444;transform:scaleX(0.975);transform-origin:0 0;">NM_000142.5</div><div class="t" style="left:1765.40px;top:274.26px;font-size:13.3px;line-height:13.3px;color:#444;">ex</div><div class="r" style="left:664.2px;top:273.72px;width:31.7px;height:15.8px;border-radius:7.9px;background:#cc1c10;color:#fff;font-weight:700;font-size:9.4px;line-height:15.8px;text-align:center;letter-spacing:0.15px">Tier I</div><svg class="r" style="left:992.80px;top:274.22px" width="24" height="24" viewBox="0 0 24 24"><circle cx="12" cy="12" r="9.2" fill="none" stroke="#1e63be" stroke-width="2.3"/><circle cx="12" cy="12" r="7.2" fill="none" stroke="#a8d6fa" stroke-width="1.6"/><circle cx="12" cy="12" r="5.3" fill="none" stroke="#1e63be" stroke-width="2.1"/><circle cx="12" cy="12" r="3.3" fill="none" stroke="#a8d6fa" stroke-width="1.5"/><circle cx="12" cy="12" r="2.2" fill="#1e63be"/><circle cx="3.6" cy="5.2" r="4" fill="#2c9e2c"/></svg><div class="r" style="left:0;top:306.52px;width:1779.5px;height:43.42px;background:#ffffff"></div><div class="r" style="left:7.80px;top:306.52px;width:1px;height:43.42px;background:#efefef"></div><div class="r" style="left:127.00px;top:306.52px;width:1px;height:43.42px;background:#efefef"></div><div class="r" style="left:266.50px;top:306.52px;width:1px;height:43.42px;background:#efefef"></div><div class="r" style="left:406.50px;top:306.52px;width:1px;height:43.42px;background:#efefef"></div><div class="r" style="left:457.00px;top:306.52px;width:1px;height:43.42px;background:#efefef"></div><div class="r" style="left:593.00px;top:306.52px;width:1px;height:43.42px;background:#efefef"></div><div class="r" style="left:768.50px;top:306.52px;width:1px;height:43.42px;background:#efefef"></div><div class="r" style="left:848.50px;top:306.52px;width:1px;height:43.42px;background:#efefef"></div><div class="r" style="left:929.00px;top:306.52px;width:1px;height:43.42px;background:#efefef"></div><div class="r" style="left:1077.00px;top:306.52px;width:1px;height:43.42px;background:#efefef"></div><div class="r" style="left:1252.50px;top:306.52px;width:1px;height:43.42px;background:#efefef"></div><div class="r" style="left:1436.50px;top:306.52px;width:1px;height:43.42px;background:#efefef"></div><div class="r" style="left:1622.00px;top:306.52px;width:1px;height:43.42px;background:#efefef"></div><div class="r" style="left:1758.00px;top:306.52px;width:1px;height:43.42px;background:#efefef"></div><div class="t" style="left:17.80px;top:317.68px;font-size:13.3px;line-height:13.3px;color:#444;transform:scaleX(0.905);transform-origin:0 0;">KIF5B::RET</div><div class="t" style="left:137.10px;top:317.68px;font-size:13.3px;line-height:13.3px;color:#444;">chr10:32306071 (-)</div><div class="t" style="left:275.90px;top:317.68px;font-size:13.3px;line-height:13.3px;color:#444;">chr10:43609928 (+)</div><div class="t" style="left:465.50px;top:317.68px;font-size:13.3px;line-height:13.3px;color:#444;">-</div><div class="t" style="left:806.20px;top:317.68px;font-size:13.3px;line-height:13.3px;color:#444;">-</div><div class="t" style="left:886.70px;top:317.68px;font-size:13.3px;line-height:13.3px;color:#444;">-</div><div class="t" style="left:1085.50px;top:317.68px;font-size:13.3px;line-height:13.3px;color:#444;transform:scaleX(0.992);transform-origin:0 0;">Gain-of-function</div><div class="t" style="left:1260.50px;top:317.68px;font-size:13.3px;line-height:13.3px;color:#444;transform:scaleX(0.981);transform-origin:0 0;">Kinesin</div><div class="t" style="left:1445.60px;top:317.68px;font-size:13.3px;line-height:13.3px;color:#444;transform:scaleX(0.952);transform-origin:0 0;">PK_Tyr_Ser-Thr</div><div class="t" style="left:1631.30px;top:317.68px;font-size:13.3px;line-height:13.3px;color:#444;transform:scaleX(0.975);transform-origin:0 0;">NM_004521.3</div><div class="t" style="left:1765.40px;top:317.68px;font-size:13.3px;line-height:13.3px;color:#444;">ex</div><div class="r" style="left:407px;top:306.52px;width:50px;height:43.42px;overflow:hidden"><div class="r" style="left:10.35px;top:10.57px;width:12.5px;height:12.5px;border-radius:50%;background:#ececec"></div></div><div class="r" style="left:664.2px;top:317.14px;width:31.7px;height:15.8px;border-radius:7.9px;background:#cc1c10;color:#fff;font-weight:700;font-size:9.4px;line-height:15.8px;text-align:center;letter-spacing:0.15px">Tier I</div><svg class="r" style="left:992.80px;top:317.64px" width="24" height="24" viewBox="0 0 24 24"><circle cx="12" cy="12" r="9.2" fill="none" stroke="#1e63be" stroke-width="2.3"/><circle cx="12" cy="12" r="7.2" fill="none" stroke="#a8d6fa" stroke-width="1.6"/><circle cx="12" cy="12" r="5.3" fill="none" stroke="#1e63be" stroke-width="2.1"/><circle cx="12" cy="12" r="3.3" fill="none" stroke="#a8d6fa" stroke-width="1.5"/><circle cx="12" cy="12" r="2.2" fill="#1e63be"/><circle cx="3.6" cy="5.2" r="4" fill="#2c9e2c"/></svg><div class="r" style="left:0;top:349.94px;width:1779.5px;height:32.06px;background:#f2f2f2"></div><div class="r" style="left:7.80px;top:349.94px;width:1px;height:32.06px;background:#f8f8f8"></div><div class="r" style="left:127.00px;top:349.94px;width:1px;height:32.06px;background:#f8f8f8"></div><div class="r" style="left:266.50px;top:349.94px;width:1px;height:32.06px;background:#f8f8f8"></div><div class="r" style="left:406.50px;top:349.94px;width:1px;height:32.06px;background:#f8f8f8"></div><div class="r" style="left:457.00px;top:349.94px;width:1px;height:32.06px;background:#f8f8f8"></div><div class="r" style="left:593.00px;top:349.94px;width:1px;height:32.06px;background:#f8f8f8"></div><div class="r" style="left:768.50px;top:349.94px;width:1px;height:32.06px;background:#f8f8f8"></div><div class="r" style="left:848.50px;top:349.94px;width:1px;height:32.06px;background:#f8f8f8"></div><div class="r" style="left:929.00px;top:349.94px;width:1px;height:32.06px;background:#f8f8f8"></div><div class="r" style="left:1077.00px;top:349.94px;width:1px;height:32.06px;background:#f8f8f8"></div><div class="r" style="left:1252.50px;top:349.94px;width:1px;height:32.06px;background:#f8f8f8"></div><div class="r" style="left:1436.50px;top:349.94px;width:1px;height:32.06px;background:#f8f8f8"></div><div class="r" style="left:1622.00px;top:349.94px;width:1px;height:32.06px;background:#f8f8f8"></div><div class="r" style="left:1758.00px;top:349.94px;width:1px;height:32.06px;background:#f8f8f8"></div><div class="t" style="left:17.80px;top:361.10px;font-size:13.3px;line-height:13.3px;color:#444;transform:scaleX(0.902);transform-origin:0 0;">LMNA::NTRK1</div><div class="t" style="left:137.10px;top:361.10px;font-size:13.3px;line-height:13.3px;color:#444;">chr1:156100564 (+)</div><div class="t" style="left:275.90px;top:361.10px;font-size:13.3px;line-height:13.3px;color:#444;">chr1:156844698 (+)</div><div class="t" style="left:465.50px;top:361.10px;font-size:13.3px;line-height:13.3px;color:#444;">-</div><div class="t" style="left:806.20px;top:361.10px;font-size:13.3px;line-height:13.3px;color:#444;">-</div><div class="t" style="left:886.70px;top:361.10px;font-size:13.3px;line-height:13.3px;color:#444;">-</div><div class="t" style="left:1085.50px;top:361.10px;font-size:13.3px;line-height:13.3px;color:#444;transform:scaleX(0.992);transform-origin:0 0;">Gain-of-function</div><div class="t" style="left:1260.50px;top:361.10px;font-size:13.3px;line-height:13.3px;color:#444;transform:scaleX(0.983);transform-origin:0 0;">Filament</div><div class="t" style="left:1445.60px;top:361.10px;font-size:13.3px;line-height:13.3px;color:#444;transform:scaleX(0.941);transform-origin:0 0;">TrkA_TMD,PK_Tyr_Ser-Thr</div><div class="t" style="left:1631.30px;top:361.10px;font-size:13.3px;line-height:13.3px;color:#444;transform:scaleX(0.975);transform-origin:0 0;">NM_170707.4</div><div class="t" style="left:1765.40px;top:361.10px;font-size:13.3px;line-height:13.3px;color:#444;">ex</div><div class="r" style="left:664.2px;top:360.56px;width:31.7px;height:15.8px;border-radius:7.9px;background:#cc1c10;color:#fff;font-weight:700;font-size:9.4px;line-height:15.8px;text-align:center;letter-spacing:0.15px">Tier I</div><svg class="r" style="left:992.80px;top:361.06px" width="24" height="24" viewBox="0 0 24 24"><circle cx="12" cy="12" r="9.2" fill="none" stroke="#1e63be" stroke-width="2.3"/><circle cx="12" cy="12" r="7.2" fill="none" stroke="#a8d6fa" stroke-width="1.6"/><circle cx="12" cy="12" r="5.3" fill="none" stroke="#1e63be" stroke-width="2.1"/><circle cx="12" cy="12" r="3.3" fill="none" stroke="#a8d6fa" stroke-width="1.5"/><circle cx="12" cy="12" r="2.2" fill="#1e63be"/><circle cx="3.6" cy="5.2" r="4" fill="#2c9e2c"/></svg><svg class="r" style="left:103.8px;top:100.84px" width="16" height="12" viewBox="0 0 16 12"><path d="M6 0.8c3 0 5.2 1.6 5.2 3.6S9 8 6 8c-0.8 0-1.5-0.1-2.1-0.3L1 9l0.9-2.1C1.2 6.2 0.8 5.3 0.8 4.4 0.8 2.4 3 0.8 6 0.8z" fill="#4a9ff0"/><path d="M10.8 4.2c2.5 0 4.4 1.4 4.4 3.2 0 0.8-0.3 1.5-0.9 2.1l0.7 1.9-2.4-1c-0.6 0.2-1.2 0.3-1.8 0.3-2.5 0-4.4-1.4-4.4-3.2s1.9-3.3 4.4-3.3z" fill="#4a9ff0" stroke="#f2f2f2" stroke-width="0.9"/></svg></div><div class="r" style="left:1808.00px;top:250.50px;width:10.50px;height:366.00px;background:#c2c2c2;border-radius:5px;"></div>
</body></html>
